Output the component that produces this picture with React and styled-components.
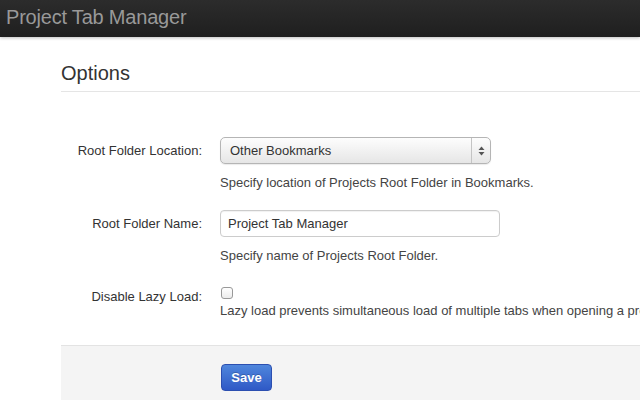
import React from "react";
import styled, { createGlobalStyle } from "styled-components";

const GlobalStyle = createGlobalStyle`
  html, body {
    margin: 0;
    padding: 0;
    background: #fff;
    font-family: "Liberation Sans", Arial, sans-serif;
    font-size: 13px;
    color: #333;
  }
`;

const Navbar = styled.div`
  height: 37px;
  background: linear-gradient(to bottom, #2c2c2c, #1f1f1f);
  box-shadow: 0 1px 3px rgba(0, 0, 0, 0.25);
  display: flex;
  align-items: center;
  padding-left: 6px;
`;

const Brand = styled.div`
  font-size: 20px;
  color: #999;
  letter-spacing: -0.2px;
  margin-top: -3px;
`;

const Container = styled.div`
  padding-left: 61px;
`;

const PageHeader = styled.h1`
  margin: 0;
  padding: 21px 0 3px;
  font-size: 20px;
  font-weight: normal;
  line-height: 30px;
  color: #333;
  border-bottom: 1px solid #e5e5e5;
`;

const Form = styled.div`
  padding-top: 45px;
  display: flex;
  flex-direction: column;
  gap: 19px;
  padding-bottom: 26px;
`;

const Row = styled.div`
  display: grid;
  grid-template-columns: 141px 1fr;
  column-gap: 18px;
  margin-top: ${(p) => p.$shift || "0"};
`;

const Label = styled.label`
  text-align: right;
  height: ${(p) => (p.$compact ? "16px" : "27px")};
  line-height: ${(p) => (p.$compact ? "16px" : "27px")};
  white-space: nowrap;
  color: #333;
  margin-top: ${(p) => (p.$compact ? "4px" : "0")};
`;

const Controls = styled.div`
  display: flex;
  flex-direction: column;
`;

const Help = styled.div`
  color: #444;
  line-height: 16px;
  margin-top: ${(p) => p.$gap || "11px"};
  white-space: nowrap;
  overflow: hidden;
`;

const SelectBox = styled.div`
  width: 271px;
  height: 27px;
  box-sizing: border-box;
  border: 1px solid #b5b5b5;
  border-radius: 5px;
  background: linear-gradient(to bottom, #fdfdfd, #e6e6e6);
  box-shadow: 0 1px 1px rgba(0, 0, 0, 0.08);
  display: flex;
  align-items: center;
`;

const SelectText = styled.div`
  flex: 1;
  padding-left: 9px;
  color: #333;
`;

const ArrowZone = styled.div`
  width: 18px;
  height: 100%;
  border-left: 1px solid #c4c4c4;
  display: flex;
  align-items: center;
  justify-content: center;
`;

const TextInput = styled.div`
  width: 280px;
  height: 27px;
  box-sizing: border-box;
  border: 1px solid #ccc;
  border-radius: 4px;
  box-shadow: inset 0 1px 1px rgba(0, 0, 0, 0.06);
  padding-left: 7px;
  display: flex;
  align-items: center;
  color: #333;
`;

const Checkbox = styled.div`
  width: 12px;
  height: 12px;
  box-sizing: border-box;
  margin-left: 1px;
  margin-top: 2px;
  border: 1px solid #999;
  border-radius: 3px;
  background: linear-gradient(to bottom, #fff, #ececec);
`;

const Actions = styled.div`
  background: #f4f4f4;
  border-top: 1px solid #e3e3e3;
  padding: 18px 0 20px 159px;
`;

const SaveButton = styled.button`
  width: 51px;
  height: 27px;
  border: 1px solid #2c4fb0;
  border-radius: 4px;
  background: linear-gradient(to bottom, #4f86dc, #2f59c6);
  color: #fff;
  font-family: "Liberation Sans", Arial, sans-serif;
  font-size: 13px;
  font-weight: bold;
  margin-left: 1px;
  padding: 0;
  text-shadow: 0 -1px 0 rgba(0, 0, 0, 0.2);
  cursor: pointer;
`;

const Arrows = () => (
  <svg width="7" height="10" viewBox="0 0 7 10">
    <path d="M3.5 0.5 L6.5 4 L0.5 4 Z" fill="#555" />
    <path d="M3.5 9.5 L6.5 6 L0.5 6 Z" fill="#555" />
  </svg>
);

export default function App() {
  return (
    <>
      <GlobalStyle />
      <Navbar>
        <Brand>Project Tab Manager</Brand>
      </Navbar>
      <Container>
        <PageHeader>Options</PageHeader>
        <Form>
          <Row>
            <Label>Root Folder Location:</Label>
            <Controls>
              <SelectBox>
                <SelectText>Other Bookmarks</SelectText>
                <ArrowZone>
                  <Arrows />
                </ArrowZone>
              </SelectBox>
              <Help>Specify location of Projects Root Folder in Bookmarks.</Help>
            </Controls>
          </Row>
          <Row>
            <Label>Root Folder Name:</Label>
            <Controls>
              <TextInput>Project Tab Manager</TextInput>
              <Help>Specify name of Projects Root Folder.</Help>
            </Controls>
          </Row>
          <Row $shift="2px">
            <Label $compact>Disable Lazy Load:</Label>
            <Controls>
              <Checkbox />
              <Help $gap="4px">
                Lazy load prevents simultaneous load of multiple tabs when
                opening a project.
              </Help>
            </Controls>
          </Row>
        </Form>
        <Actions>
          <SaveButton>Save</SaveButton>
        </Actions>
      </Container>
    </>
  );
}
